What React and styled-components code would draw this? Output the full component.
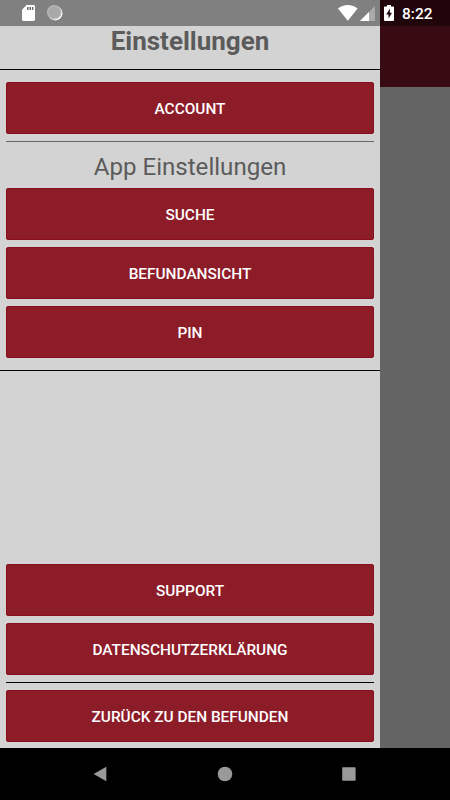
import React from "react";
import styled, {createGlobalStyle} from "styled-components";

const drawerGrey = '#d3d3d3'
const buttonRed = '#8d1c29'
const textGrey = '#5b5b5b'

const GlobalStyle = createGlobalStyle`
  * {
    box-sizing: border-box;
  }
  body {
    margin: 0;
    background: #000;
    font-family: Roboto, "Liberation Sans", sans-serif;
  }
`
const Screen = styled.div`
  display: flex;
  flex-direction: column;
  width: 450px;
  height: 800px;
  overflow: hidden;
`
const Main = styled.div`
  display: flex;
  height: 748px;
`
const Drawer = styled.aside`
  display: flex;
  flex-direction: column;
  width: 380px;
  background: ${drawerGrey};
`
const Backdrop = styled.div`
  display: flex;
  flex-direction: column;
  width: 70px;
  background: #646464;
`
const StatusBar = styled.div`
  display: flex;
  align-items: flex-start;
  height: 26px;
  flex-shrink: 0;
  padding: ${props => props.$padding};
  background: ${props => props.$color};
  svg {
    display: block;
    flex-shrink: 0;
  }
`
const StatusIcons = styled.div`
  display: flex;
  gap: ${props => props.$gap};
`
const Spacer = styled.div`
  flex: 1;
`
const Clock = styled.span`
  margin-left: 8px;
  color: #fff;
  font-size: 15.5px;
  font-weight: 500;
  line-height: 18px;
`
const Toolbar = styled.div`
  height: 61px;
  background: #380a11;
`
const Header = styled.header`
  height: 44px;
  border-bottom: 1px solid #000;
`
const Title = styled.h1`
  margin: 0;
  color: ${textGrey};
  font-size: 26px;
  font-weight: 700;
  line-height: 30px;
  text-align: center;
`
const Section = styled.section`
  display: flex;
  flex-direction: column;
  padding: ${props => props.$padding};
  border-bottom: ${props => props.$line ? '1px solid #000' : 'none'};
`
const Group = styled.div`
  display: flex;
  flex-direction: column;
  gap: 7px;
`
const Subtitle = styled.h2`
  margin: 0;
  height: 46px;
  color: ${textGrey};
  font-size: 24.1px;
  font-weight: 400;
  line-height: 50px;
  text-align: center;
`
const Divider = styled.hr`
  width: 100%;
  height: 1px;
  margin: ${props => props.$margin};
  border: none;
  background: ${props => props.$color};
`
const Button = styled.button`
  display: block;
  width: 100%;
  height: 52px;
  padding: 1px 0 0;
  border: 1px solid #880f1b;
  border-radius: 2px;
  background: ${buttonRed};
  color: #fff;
  font-family: inherit;
  font-size: 15.4px;
  font-weight: 500;
  line-height: 18px;
`
const NavBar = styled.nav`
  display: flex;
  justify-content: space-between;
  align-items: center;
  height: 52px;
  padding: 0 93px 0 92px;
  background: #000;
`

const SdCard = () => (
    <svg width="13" height="16" viewBox="0 0 13 16">
        <path d="M4.6 0H11.6Q13 0 13 1.4V14.6Q13 16 11.6 16H1.4Q0 16 0 14.6V4.8Z" fill="#fff"/>
        <path d="M5 2H6.5V5H5zM7.5 2H9V5H7.5zM10 2H11.3V5H10z" fill="#666"/>
    </svg>
)

const Sync = () => (
    <svg width="16" height="16" viewBox="0 0 16 16">
        <circle cx="8.2" cy="8.2" r="7.3" fill="#fff"/>
        <circle cx="7.2" cy="7.2" r="7.2" fill="#a9a9a9"/>
        <circle cx="7.2" cy="7.2" r="6.5" fill="none" stroke="#c4c4c4" strokeWidth="1.2" strokeDasharray="1 1"/>
    </svg>
)

const Wifi = () => (
    <svg width="20" height="16" viewBox="0 0 20 16">
        <path d="M0 3.5Q4.2 0 9.8 0T19.6 3.5L9.8 15.8Z" fill="#fff"/>
    </svg>
)

const Signal = () => (
    <svg width="15" height="16" viewBox="0 0 15 16">
        <path d="M15 1V16H0Z" fill="#aaa"/>
        <path d="M9 7V16H0Z" fill="#fff"/>
    </svg>
)

const Battery = () => (
    <svg width="10" height="16" viewBox="0 0 10 16">
        <path d="M3 0H7V1.5H9Q10 1.5 10 2.5V15Q10 16 9 16H1Q0 16 0 15V2.5Q0 1.5 1 1.5H3Z" fill="#fff"/>
        <path d="M6 3.6L2.2 9.4H4.5V13.5L8 7.7H5.8Z" fill="#20060a"/>
    </svg>
)

const NavIcon = ({children}) => (
    <svg width="16" height="16" viewBox="0 0 16 16" fill="#999">{children}</svg>
)

const App = () => {

    const
        settings = ['SUCHE', 'BEFUNDANSICHT', 'PIN'],
        info = ['SUPPORT', 'DATENSCHUTZERKLÄRUNG'];

    return (
        <Screen>
            <GlobalStyle/>
            <Main>
                <Drawer>
                    <StatusBar $color='#808080' $padding='5px 5px 0 22px'>
                        <StatusIcons $gap='12px'>
                            <SdCard/>
                            <Sync/>
                        </StatusIcons>
                        <Spacer/>
                        <StatusIcons $gap='2px'>
                            <Wifi/>
                            <Signal/>
                        </StatusIcons>
                    </StatusBar>
                    <Header>
                        <Title>Einstellungen</Title>
                    </Header>
                    <Section $padding='12px 6px 12px' $line>
                        <Button>ACCOUNT</Button>
                        <Divider $color='#626764' $margin='7px 0 0'/>
                        <Subtitle>App Einstellungen</Subtitle>
                        <Group>
                            {settings.map(item => <Button key={item}>{item}</Button>)}
                        </Group>
                    </Section>
                    <Spacer/>
                    <Section $padding='0 6px 6px'>
                        <Group>
                            {info.map(item => <Button key={item}>{item}</Button>)}
                        </Group>
                        <Divider $color='#000' $margin='7px 0'/>
                        <Button>ZURÜCK ZU DEN BEFUNDEN</Button>
                    </Section>
                </Drawer>
                <Backdrop>
                    <StatusBar $color='#20060a' $padding='5px 0 0 4px'>
                        <Battery/>
                        <Clock>8:22</Clock>
                    </StatusBar>
                    <Toolbar/>
                </Backdrop>
            </Main>
            <NavBar>
                <NavIcon><path d="M1.6 8L14.3 .8V15.2Z"/></NavIcon>
                <NavIcon><circle cx="8" cy="8" r="7.3"/></NavIcon>
                <NavIcon><rect x="1.2" y="1.3" width="13.4" height="13.4" rx=".8"/></NavIcon>
            </NavBar>
        </Screen>
    )
}

export default App
